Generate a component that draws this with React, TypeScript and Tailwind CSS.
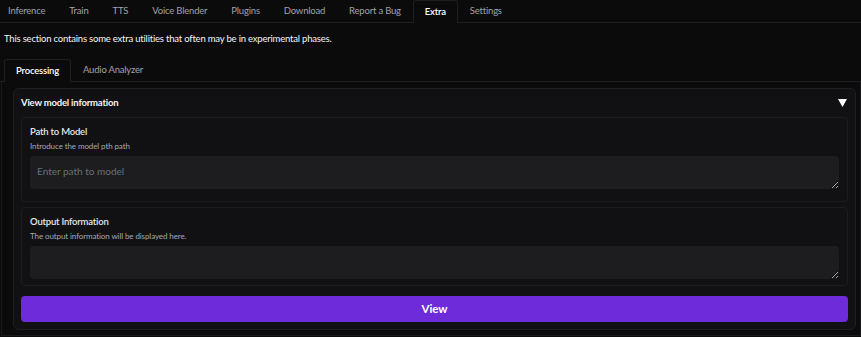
import { useState } from "react"

const topTabs = [
  "Inference",
  "Train",
  "TTS",
  "Voice Blender",
  "Plugins",
  "Download",
  "Report a Bug",
  "Extra",
  "Settings",
]

function Field({
  label,
  info,
  placeholder,
  last,
}: {
  label: string
  info: string
  placeholder?: string
  last?: boolean
}) {
  return (
    <div
      className={
        last
          ? "rounded-[4px] border border-[#1c1c20] bg-[#111113] px-[8px] pt-[7px] pb-[6px]"
          : "rounded-[4px] border border-[#1c1c20] bg-[#111113] px-[8px] pt-[7px] pb-[12px]"
      }
    >
      <div className="text-[9.5px] font-semibold leading-[14px] tracking-[-0.2px] text-[#e5e7eb]">
        {label}
      </div>
      <div className="mt-[1px] text-[8px] leading-[12px] tracking-[-0.1px] text-[#a3a9b8]">
        {info}
      </div>
      <textarea
        rows={1}
        placeholder={placeholder}
        className="mt-[4px] block h-[33px] w-full resize-y rounded-[4px] bg-[#1d1d1f] px-[7px] py-[7px] text-[10px] leading-[16px] text-[#e5e7eb] outline-none placeholder:text-[#6b6f78]"
      />
    </div>
  )
}

export default function App() {
  const [active, setActive] = useState("Extra")
  const [sub, setSub] = useState("Processing")

  return (
    <div className="h-[337px] w-full overflow-hidden bg-[#0b0b0b] font-['Lato',sans-serif] text-[#e5e7eb]">
      {/* main tabs */}
      <div className="flex h-[23px] items-end border-b border-[#1f1f22]">
        <div className="-ml-[4px] flex">
          {topTabs.map((t) => (
            <button
              key={t}
              onClick={() => setActive(t)}
              className={
                active === t
                  ? "-mb-[1px] h-[23px] rounded-t-[3px] border border-b-0 border-[#1f1f22] bg-[#0b0b0b] px-[11px] text-[9.5px] font-semibold tracking-[-0.2px] text-white"
                  : "h-[22px] border border-transparent px-[11px] text-[9.5px] tracking-[-0.2px] text-[#a1a1aa]"
              }
            >
              {t}
            </button>
          ))}
        </div>
      </div>

      <p className="mt-[9px] pl-[4px] text-[9.5px] leading-[14px] tracking-[-0.2px] text-[#f3f4f6]">
        This section contains some extra utilities that often may be in
        experimental phases.
      </p>

      {/* sub tabs */}
      <div className="mt-[13px] flex h-[23px] items-end border-b border-[#1f1f22] pl-[4px]">
        {["Processing", "Audio Analyzer"].map((t) => (
          <button
            key={t}
            onClick={() => setSub(t)}
            className={
              sub === t
                ? "-mb-[1px] h-[23px] rounded-t-[3px] border border-b-0 border-[#1f1f22] bg-[#0b0b0b] px-[11px] text-[9.5px] font-semibold tracking-[-0.2px] text-white"
                : "h-[22px] border border-transparent px-[11px] text-[9.5px] tracking-[-0.2px] text-[#a1a1aa]"
            }
          >
            {t}
          </button>
        ))}
      </div>

      {/* tab panel */}
      <div className="ml-[1px] border-x border-b border-[#1a1a1d] pl-[11px] pr-[4px] pt-[6px] pb-[5px]">
        <div className="rounded-[6px] border border-[#1f1f23] bg-[#111113] px-[7px] pb-[7px]">
          <div className="flex h-[28px] items-center justify-between pr-[1px]">
            <span className="text-[9.5px] font-bold tracking-[-0.2px] text-[#f3f4f6]">
              View model information
            </span>
            <svg width="9" height="8" viewBox="0 0 9 8">
              <path d="M0 0 H9 L4.5 8 Z" fill="#ffffff" />
            </svg>
          </div>
          <div className="flex flex-col gap-[5px]">
            <Field
              label="Path to Model"
              info="Introduce the model pth path"
              placeholder="Enter path to model"
            />
            <Field
              label="Output Information"
              info="The output information will be displayed here."
              last
            />
          </div>
          <button className="mt-[10px] h-[26px] w-full rounded-[4px] bg-[#6d2bd9] text-[11.5px] font-bold text-white">
            View
          </button>
        </div>
      </div>
    </div>
  )
}
